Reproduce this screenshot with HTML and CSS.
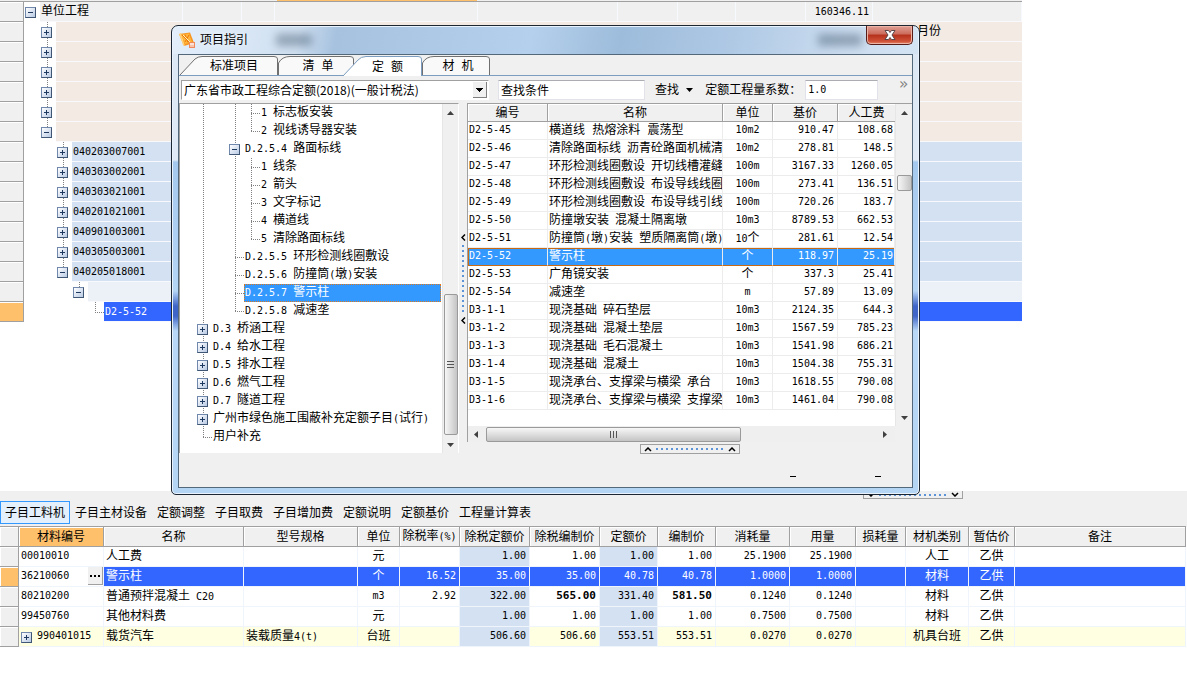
FILE: index.html
```html
<!DOCTYPE html>
<html lang="zh-CN">
<head>
<meta charset="utf-8">
<title>项目指引</title>
<link rel="stylesheet" href="styles.css">
</head>
<body>
<main class="desk">
<section class="sheet" aria-label="单位工程">
  <div class="strip"><span class="strip-hot"></span></div>
  <div class="row total"><span class="gut"></span><span class="tw"><button class="box minus" aria-label="折叠"></button></span><span class="cell c1">单位工程</span><span class="cell c2"></span><span class="cell c3"></span><span class="cell c4"></span><span class="cell c5"></span><span class="cell c6"></span><span class="cell c7"></span><span class="cell c8"></span><span class="cell c9 m">160346.11</span><span class="cell"></span></div>
  <div class="row part"><span class="gut"></span><span class="tw"></span><span class="tw v"><button class="box plus" aria-label="展开"></button></span><span class="cell"></span><span class="cell month">月份</span></div>
  <div class="row part"><span class="gut"></span><span class="tw"></span><span class="tw v"><button class="box plus" aria-label="展开"></button></span><span class="cell"></span></div>
  <div class="row part"><span class="gut"></span><span class="tw"></span><span class="tw v"><button class="box plus" aria-label="展开"></button></span><span class="cell"></span></div>
  <div class="row part"><span class="gut"></span><span class="tw"></span><span class="tw v"><button class="box plus" aria-label="展开"></button></span><span class="cell"></span></div>
  <div class="row part"><span class="gut"></span><span class="tw"></span><span class="tw v"><button class="box plus" aria-label="展开"></button></span><span class="cell"></span></div>
  <div class="row part"><span class="gut"></span><span class="tw"></span><span class="tw half"><button class="box minus" aria-label="折叠"></button></span><span class="cell"></span></div>
  <div class="row item"><span class="gut"></span><span class="tw"></span><span class="tw"></span><span class="tw v"><button class="box plus" aria-label="展开"></button></span><span class="cell m">040203007001</span></div>
  <div class="row item"><span class="gut"></span><span class="tw"></span><span class="tw"></span><span class="tw v"><button class="box plus" aria-label="展开"></button></span><span class="cell m">040303002001</span></div>
  <div class="row item"><span class="gut"></span><span class="tw"></span><span class="tw"></span><span class="tw v"><button class="box plus" aria-label="展开"></button></span><span class="cell m">040303021001</span></div>
  <div class="row item"><span class="gut"></span><span class="tw"></span><span class="tw"></span><span class="tw v"><button class="box plus" aria-label="展开"></button></span><span class="cell m">040201021001</span></div>
  <div class="row item"><span class="gut"></span><span class="tw"></span><span class="tw"></span><span class="tw v"><button class="box plus" aria-label="展开"></button></span><span class="cell m">040901003001</span></div>
  <div class="row item"><span class="gut"></span><span class="tw"></span><span class="tw"></span><span class="tw v"><button class="box plus" aria-label="展开"></button></span><span class="cell m">040305003001</span></div>
  <div class="row item"><span class="gut"></span><span class="tw"></span><span class="tw"></span><span class="tw half"><button class="box minus" aria-label="折叠"></button></span><span class="cell m">040205018001</span></div>
  <div class="row blank"><span class="gut"></span><span class="tw"></span><span class="tw"></span><span class="tw"></span><span class="tw half"><button class="box minus" aria-label="折叠"></button></span><span class="cell"></span></div>
  <div class="row current"><span class="gut"></span><span class="tw"></span><span class="tw"></span><span class="tw"></span><span class="tw"></span><span class="tw end"></span><span class="cell m">D2-5-52</span></div>
</section>

<section class="dialog" role="dialog" aria-labelledby="dlg-title">
  <header class="title">
    <svg class="logo" width="16" height="16" viewBox="0 0 16 16" aria-hidden="true"><path d="M0 2 11 0.500 15 11 5 14Z" fill="#f7941d"/><path d="M0 2 2 1 6 14 4 13Z" fill="#ffd27a"/><path d="M2 2.500 10 1.500 13 10 6 12Z" fill="#ffb43c"/><path d="M3 3l7 7M6 2.500l3 8M10 3 6 10" stroke="#e8780c" stroke-width="1" fill="none"/><path d="M4 3l7 7" stroke="#fff1b8" stroke-width="1" fill="none"/><path d="M10 10h6v6h-6z" fill="#f08a5c"/><path d="M11 12h4M12 11v4M14 11v4" stroke="#fff" stroke-width="1"/></svg>
    <h1 id="dlg-title">项目指引</h1>
    <span class="smudge s1"></span><span class="smudge s2"></span>
    <button class="close" aria-label="关闭"><svg width="14" height="12" viewBox="0 0 14 12"><path d="M2 1.500h3.500L7 3.500l1.500-2H12L9 6l3 4.500H8.500L7 8.500l-1.500 2H2L5 6Z" fill="#fff" stroke="#5a4548" stroke-width="1"/></svg></button>
  </header>
  <div class="client">
    <nav class="tabs">
      <button class="tab t1"><svg viewBox="0 0 98 20" width="98" height="20"><path d="M0 20 15 4Q18 1.500 22 1.500H94Q97.500 1.500 97.500 4V20" /></svg><span>标准项目</span></button>
      <button class="tab t2"><svg viewBox="0 0 76 20" width="76" height="20"><path d="M.5 20V8Q4 1.500 12 1.500H72Q75.500 1.500 75.500 4V20"/></svg><span>清 单</span></button>
      <button class="tab t3" aria-current="true"><svg viewBox="0 0 79 21" width="79" height="21"><path d="M0 21 15 5Q18 1.500 23 1.500H75Q78.500 1.500 78.500 4V21"/></svg><span>定 额</span></button>
      <button class="tab t4"><svg viewBox="0 0 68 20" width="68" height="20"><path d="M.5 20V8Q4 1.500 12 1.500H64Q67.500 1.500 67.500 4V20"/></svg><span>材 机</span></button>
    </nav>
    <div class="tools">
      <select class="library" aria-label="定额库"><option>广东省市政工程综合定额(2018)(一般计税法)</option></select>
      <input class="search" type="text" value="查找条件" aria-label="查找条件">
      <button class="find">查找 <svg width="7" height="4" viewBox="0 0 7 4"><path d="M0 0h7L3.500 4Z"/></svg></button>
      <label for="ratio">定额工程量系数：</label>
      <input id="ratio" class="ratio" type="text" value="1.0">
      <button class="more" aria-label="更多">»</button>
    </div>
    <div class="panes">
      <div class="treepane">
        <div class="tree">
          <div class="node"><span class="tw v"></span><span class="tw"></span><span class="tw v"></span><span class="tw tee"></span><span class="lab"><span class="m">1 </span>标志板安装</span></div>
          <div class="node"><span class="tw v"></span><span class="tw"></span><span class="tw v"></span><span class="tw end"></span><span class="lab"><span class="m">2 </span>视线诱导器安装</span></div>
          <div class="node"><span class="tw v"></span><span class="tw"></span><span class="tw v"><button class="box minus" aria-label="折叠"></button></span><span class="lab"><span class="m">D.2.5.4 </span>路面标线</span></div>
          <div class="node"><span class="tw v"></span><span class="tw"></span><span class="tw v"></span><span class="tw tee"></span><span class="lab"><span class="m">1 </span>线条</span></div>
          <div class="node"><span class="tw v"></span><span class="tw"></span><span class="tw v"></span><span class="tw tee"></span><span class="lab"><span class="m">2 </span>箭头</span></div>
          <div class="node"><span class="tw v"></span><span class="tw"></span><span class="tw v"></span><span class="tw tee"></span><span class="lab"><span class="m">3 </span>文字标记</span></div>
          <div class="node"><span class="tw v"></span><span class="tw"></span><span class="tw v"></span><span class="tw tee"></span><span class="lab"><span class="m">4 </span>横道线</span></div>
          <div class="node"><span class="tw v"></span><span class="tw"></span><span class="tw v"></span><span class="tw end"></span><span class="lab"><span class="m">5 </span>清除路面标线</span></div>
          <div class="node"><span class="tw v"></span><span class="tw"></span><span class="tw tee"></span><span class="lab"><span class="m">D.2.5.5 </span>环形检测线圈敷设</span></div>
          <div class="node"><span class="tw v"></span><span class="tw"></span><span class="tw tee"></span><span class="lab"><span class="m">D.2.5.6 </span>防撞筒<span class="m">(</span>墩<span class="m">)</span>安装</span></div>
          <div class="node sel"><span class="tw v"></span><span class="tw"></span><span class="tw tee"></span><span class="lab"><span class="m">D.2.5.7 </span>警示柱</span></div>
          <div class="node"><span class="tw v"></span><span class="tw"></span><span class="tw end"></span><span class="lab"><span class="m">D.2.5.8 </span>减速垄</span></div>
          <div class="node"><span class="tw v"><button class="box plus" aria-label="展开"></button></span><span class="lab"><span class="m">D.3 </span>桥涵工程</span></div>
          <div class="node"><span class="tw v"><button class="box plus" aria-label="展开"></button></span><span class="lab"><span class="m">D.4 </span>给水工程</span></div>
          <div class="node"><span class="tw v"><button class="box plus" aria-label="展开"></button></span><span class="lab"><span class="m">D.5 </span>排水工程</span></div>
          <div class="node"><span class="tw v"><button class="box plus" aria-label="展开"></button></span><span class="lab"><span class="m">D.6 </span>燃气工程</span></div>
          <div class="node"><span class="tw v"><button class="box plus" aria-label="展开"></button></span><span class="lab"><span class="m">D.7 </span>隧道工程</span></div>
          <div class="node"><span class="tw v"><button class="box plus" aria-label="展开"></button></span><span class="lab">广州市绿色施工围蔽补充定额子目<span class="m">(</span>试行<span class="m">)</span></span></div>
          <div class="node"><span class="tw end"></span><span class="lab">用户补充</span></div>
        </div>
        <div class="vbar"><svg width="7" height="4" viewBox="0 0 7 4"><path d="M0 4h7L3.500 0Z"/></svg><span class="track tall"></span><span class="thumb long"><svg width="7" height="8" viewBox="0 0 7 8"><path d="M0 .5h7M0 3.500h7M0 6.500h7" stroke="#555"/></svg></span><svg width="7" height="4" viewBox="0 0 7 4"><path d="M0 0h7L3.500 4Z"/></svg></div>
      </div>
      <div class="split"><svg width="5" height="7" viewBox="0 0 5 7"><path d="M4 .5 1 3.500l3 3" fill="none" stroke="#000" stroke-width="1.500"/></svg><span class="dots"></span><svg width="5" height="7" viewBox="0 0 5 7"><path d="M4 .5 1 3.500l3 3" fill="none" stroke="#000" stroke-width="1.500"/></svg></div>
      <div class="right">
      <div class="quota">
        <div class="list">
          <table class="qt">
            <colgroup><col class="q1"><col class="q2"><col class="q3"><col class="q4"><col class="q5"></colgroup>
            <thead><tr><th>编号</th><th>名称</th><th>单位</th><th>基价</th><th>人工费</th></tr></thead>
            <tbody>
            <tr><td>D2-5-45</td><td>横道线 热熔涂料 震荡型</td><td>10m2</td><td>910.47</td><td>108.68</td></tr>
            <tr><td>D2-5-46</td><td>清除路面标线<span class="m"> </span>沥青砼路面机械清</td><td>10m2</td><td>278.81</td><td>148.5</td></tr>
            <tr><td>D2-5-47</td><td>环形检测线圈敷设<span class="m"> </span>开切线槽灌缝</td><td>100m</td><td>3167.33</td><td>1260.05</td></tr>
            <tr><td>D2-5-48</td><td>环形检测线圈敷设<span class="m"> </span>布设导线线圈</td><td>100m</td><td>273.41</td><td>136.51</td></tr>
            <tr><td>D2-5-49</td><td>环形检测线圈敷设<span class="m"> </span>布设导线引线</td><td>100m</td><td>720.26</td><td>183.7</td></tr>
            <tr><td>D2-5-50</td><td>防撞墩安装<span class="m"> </span>混凝土隔离墩</td><td>10m3</td><td>8789.53</td><td>662.53</td></tr>
            <tr><td>D2-5-51</td><td>防撞筒<span class="m">(</span>墩<span class="m">)</span>安装<span class="m"> </span>塑质隔离筒<span class="m">(</span>墩<span class="m">)</span></td><td>10<span class="z">个</span></td><td>281.61</td><td>12.54</td></tr>
            <tr class="on"><td>D2-5-52</td><td>警示柱</td><td><span class="z">个</span></td><td>118.97</td><td>25.19</td></tr>
            <tr><td>D2-5-53</td><td>广角镜安装</td><td><span class="z">个</span></td><td>337.3</td><td>25.41</td></tr>
            <tr><td>D2-5-54</td><td>减速垄</td><td>m</td><td>57.89</td><td>13.09</td></tr>
            <tr><td>D3-1-1</td><td>现浇基础<span class="m"> </span>碎石垫层</td><td>10m3</td><td>2124.35</td><td>644.3</td></tr>
            <tr><td>D3-1-2</td><td>现浇基础<span class="m"> </span>混凝土垫层</td><td>10m3</td><td>1567.59</td><td>785.23</td></tr>
            <tr><td>D3-1-3</td><td>现浇基础<span class="m"> </span>毛石混凝土</td><td>10m3</td><td>1541.98</td><td>686.21</td></tr>
            <tr><td>D3-1-4</td><td>现浇基础<span class="m"> </span>混凝土</td><td>10m3</td><td>1504.38</td><td>755.31</td></tr>
            <tr><td>D3-1-5</td><td>现浇承台、支撑梁与横梁<span class="m"> </span>承台</td><td>10m3</td><td>1618.55</td><td>790.08</td></tr>
            <tr><td>D3-1-6</td><td>现浇承台、支撑梁与横梁<span class="m"> </span>支撑梁</td><td>10m3</td><td>1461.04</td><td>790.08</td></tr>
            </tbody>
          </table>
          <div class="hbar"><svg width="4" height="7" viewBox="0 0 4 7"><path d="M4 0v7L0 3.500Z"/></svg><span class="thumb wide"><svg width="8" height="7" viewBox="0 0 8 7"><path d="M.5 0v7M3.500 0v7M6.500 0v7" stroke="#555"/></svg></span><span class="track"></span><svg width="4" height="7" viewBox="0 0 4 7"><path d="M0 0v7l4-3.500Z"/></svg></div>
        </div>
        <div class="side"><div class="vbar qbar"><svg width="7" height="4" viewBox="0 0 7 4"><path d="M0 4h7L3.500 0Z"/></svg><span class="track upper"></span><span class="thumb tiny"></span><span class="track"></span><svg width="7" height="4" viewBox="0 0 7 4"><path d="M0 0h7L3.500 4Z"/></svg></div></div>
      </div>
      <div class="fold up"><svg width="8" height="5" viewBox="0 0 8 5"><path d="m1 4 3-3 3 3" fill="none" stroke="#000" stroke-width="1.500"/></svg><span class="hdots"></span><svg width="8" height="5" viewBox="0 0 8 5"><path d="m1 4 3-3 3 3" fill="none" stroke="#000" stroke-width="1.500"/></svg></div>
      </div>
    </div>
    <footer class="status"><span></span><span></span></footer>
  </div>
</section>
</main>

<section class="lower">
  <div class="foldrow"><div class="fold down"><svg width="8" height="5" viewBox="0 0 8 5"><path d="m1 1 3 3 3-3" fill="none" stroke="#000" stroke-width="1.500"/></svg><span class="hdots"></span><svg width="8" height="5" viewBox="0 0 8 5"><path d="m1 1 3 3 3-3" fill="none" stroke="#000" stroke-width="1.500"/></svg></div></div>
  <nav class="views"><button class="view active">子目工料机</button><button class="view">子目主材设备</button><button class="view">定额调整</button><button class="view">子目取费</button><button class="view">子目增加费</button><button class="view">定额说明</button><button class="view">定额基价</button><button class="view">工程量计算表</button></nav>
  <table class="mt">
    <colgroup><col class="w19"><col class="w85"><col class="w140"><col class="w114"><col class="w42"><col class="w60"><col class="w70"><col class="w70"><col class="w58"><col class="w58"><col class="w74"><col class="w66"><col class="w50"><col class="w63"><col class="w46"><col></colgroup>
    <thead><tr><th></th><th class="hot">材料编号</th><th>名称</th><th>型号规格</th><th>单位</th><th>除税率<span class="m">(%)</span></th><th>除税定额价</th><th>除税编制价</th><th>定额价</th><th>编制价</th><th>消耗量</th><th>用量</th><th>损耗量</th><th>材机类别</th><th>暂估价</th><th>备注</th></tr></thead>
    <tbody>
    <tr><th></th><td class="m">00010010</td><td>人工费</td><td></td><td class="c">元</td><td class="n"></td><td class="n tint">1.00</td><td class="n">1.00</td><td class="n tint">1.00</td><td class="n">1.00</td><td class="n">25.1900</td><td class="n">25.1900</td><td></td><td class="c">人工</td><td class="c">乙供</td><td></td></tr>
    <tr class="cur"><th></th><td class="m code"><div class="edit">36210060<button class="dotbtn" aria-label="选择材料"><i></i><i></i><i></i></button></div></td><td>警示柱</td><td></td><td class="c">个</td><td class="n">16.52</td><td class="n">35.00</td><td class="n">35.00</td><td class="n">40.78</td><td class="n">40.78</td><td class="n">1.0000</td><td class="n">1.0000</td><td></td><td class="c">材料</td><td class="c">乙供</td><td></td></tr>
    <tr><th></th><td class="m">80210200</td><td>普通预拌混凝土<span class="m"> C20</span></td><td></td><td class="c m">m3</td><td class="n">2.92</td><td class="n tint">322.00</td><td class="n strong">565.00</td><td class="n tint">331.40</td><td class="n strong">581.50</td><td class="n">0.1240</td><td class="n">0.1240</td><td></td><td class="c">材料</td><td class="c">乙供</td><td></td></tr>
    <tr><th></th><td class="m">99450760</td><td>其他材料费</td><td></td><td class="c">元</td><td class="n"></td><td class="n tint">1.00</td><td class="n">1.00</td><td class="n tint">1.00</td><td class="n">1.00</td><td class="n">0.7500</td><td class="n">0.7500</td><td></td><td class="c">材料</td><td class="c">乙供</td><td></td></tr>
    <tr class="warm"><th></th><td class="m"><div class="parent"><button class="box plus" aria-label="展开"></button>990401015</div></td><td>载货汽车</td><td>装载质量<span class="m">4(t)</span></td><td class="c">台班</td><td class="n"></td><td class="n tint">506.60</td><td class="n">506.60</td><td class="n tint">553.51</td><td class="n">553.51</td><td class="n">0.0270</td><td class="n">0.0270</td><td></td><td class="c">机具台班</td><td class="c">乙供</td><td></td></tr>
    </tbody>
  </table>
</section>
</body>
</html>
```
FILE: styles.css
```css
* { box-sizing: border-box; }
body {
  margin: 0;
  background: #fff;
  color: #000;
  font-family: "DejaVu Sans Mono", "Noto Sans CJK SC", monospace;
  font-size: 12px;
  line-height: 16px;
}
button, input, select { font: inherit; color: inherit; margin: 0; padding: 0; border: 0; background: none; }
.m { font-size: 10px; }
.desk { position: relative; min-height: 491px; }

/* project sheet */
.sheet { margin-right: 165px; }
.strip { display: flex; height: 2px; background: #f0f0f0; border-bottom: 1px solid #a0a0a0; padding-left: 277px; }
.strip-hot { width: 200px; background: #ffc06c; }
.row { display: flex; height: 20px; }
.gut { width: 24px; background: #f0f0f0; border-right: 1px solid #a0a0a0; border-bottom: 1px solid #a0a0a0; box-shadow: inset 0 1px #fff; }
.cell { flex: 1; padding-left: 1px; line-height: 18px; border-bottom: 1px solid #f8f9fc; white-space: nowrap; }
.total .cell { background: #f0f0f0; border-right: 1px solid #f6f9fd; }
.total .cell:not(:last-child) { flex: none; }
.total .c1 { width: 143px; }
.total .c2 { width: 59px; }
.total .c3 { width: 33px; }
.total .c4 { width: 203px; }
.total .c5 { width: 140px; }
.total .c6 { width: 60px; }
.total .c7 { width: 58px; }
.total .c8 { width: 70px; }
.total .c9 { width: 67px; padding-right: 3px; text-align: right; }
.part .cell { background: #f2eae3; }
.part .month { flex: none; width: 106px; }
.item .cell { background: #d3e1f2; }
.m.cell { line-height: 20px; }
.blank .cell { background: #ebf1f7; }
.current .cell { background: #3366ff; color: #fff; }
.current .gut { background: #ffc06c; }

/* tree connectors */
.tw { flex: none; width: 16px; display: flex; align-items: center; padding-left: 1px; background-repeat: no-repeat; }
.v {
  background-image: repeating-linear-gradient(#808080 0 1px, transparent 1px 2px);
  background-size: 1px 100%;
  background-position: 7px 0;
  background-repeat: no-repeat;
}
.half {
  background-image: repeating-linear-gradient(#808080 0 1px, transparent 1px 2px);
  background-size: 1px 50%;
  background-position: 7px 0;
}
.tee, .end {
  background-image: repeating-linear-gradient(#808080 0 1px, transparent 1px 2px), repeating-linear-gradient(90deg, #808080 0 1px, transparent 1px 2px);
  background-size: 1px 100%, 9px 1px;
  background-position: 7px 0, 7px 50%;
}
.end { background-size: 1px 50%, 9px 1px; }
.box {
  width: 11px;
  height: 11px;
  flex: none;
  border: 1px solid #7088ac;
  border-right-color: #3f5675;
  border-bottom-color: #3f5675;
  background-color: #dfe8f4;
  background-repeat: no-repeat;
  background-position: center;
}
.minus { background-image: linear-gradient(#1f3a60, #1f3a60), linear-gradient(135deg, #fff, #b9cae4); background-size: 5px 1px, 9px 9px; }
.plus { background-image: linear-gradient(#1f3a60, #1f3a60), linear-gradient(#1f3a60, #1f3a60), linear-gradient(135deg, #fff, #b9cae4); background-size: 5px 1px, 1px 5px, 9px 9px; }

/* dialog */
.dialog {
  position: absolute;
  left: 171px;
  top: 25px;
  width: 749px;
  padding: 0 6px 6px;
  border: 1px solid #1c2733;
  border-radius: 7px 7px 5px 5px;
  box-shadow: inset 0 0 0 1px #e8f3fd;
  background:
    linear-gradient(100deg, #e3eefa 0, #d0e0f1 17%, #a7c2df 22%, #b5d0ec 48%, #9dbcdb 60%, #afc9e5 75%, #cbdcef 90%, #d5e4f3) 0 0 / 100% 28px no-repeat,
    linear-gradient(#dbe7f4 0, #dfeaf6 134px, #a5c9ee 136px, #b5d5f5 265px, #3f65c8 280px, #3f65c8 290px, #b9d8f7 305px, #b5d5f5);
}
.title { display: flex; height: 28px; align-items: center; padding-left: 1px; }
.title h1 { margin: 0 0 0 5px; font-size: 12px; font-weight: 400; text-shadow: 0 0 6px #fff; }
.smudge { height: 12px; background: #31485e; filter: blur(4px); opacity: .4; }
.s1 { width: 36px; margin-left: 28px; }
.s2 { width: 44px; margin-left: auto; }
.close {
  width: 47px;
  height: 19px;
  margin-left: 4px;
  align-self: flex-start;
  display: grid;
  place-items: center;
  border: 1px solid #571c18;
  border-top: 0;
  border-radius: 0 0 5px 5px;
  box-shadow: inset 0 0 0 1px #eeb5a6;
  background: linear-gradient(#dfa196 0, #cc6b5b 45%, #b5301b 50%, #cf5238 85%, #e88a6c);
}
.client { border: 1px solid #53687b; background: #f0f0f0; }
.tabs { display: flex; height: 21px; align-items: flex-end; padding-left: 1px; border-bottom: 1px solid #7c9dbf; }
.tab { display: grid; place-items: center; height: 20px; line-height: 16px; }
.tab svg, .tab span { grid-area: 1 / 1; }
.tab svg { fill: #f9f9f9; stroke: #707070; align-self: start; }
.tab span { padding: 2px 0 0 10px; }
.t2 span, .t4 span { padding-left: 4px; }
.t3 { margin-left: -11px; z-index: 1; height: 21px; margin-bottom: -1px; }
.t3 svg { fill: #fff; stroke: #7c9dbf; }
.tools { display: flex; align-items: center; height: 27px; padding: 0 4px 0 2px; }
.library {
  width: 308px;
  height: 20px;
  padding-left: 2px;
  border: 1px solid #a0a0a0;
  border-right-color: #fff;
  border-bottom-color: #fff;
  appearance: none;
  font-family: "Noto Sans CJK SC", sans-serif;
  background:
    linear-gradient(45deg, transparent 50%, #000 50%) 293px 8px / 4px 4px no-repeat,
    linear-gradient(-45deg, transparent 50%, #000 50%) 297px 8px / 4px 4px no-repeat,
    linear-gradient(#f0f0f0, #f0f0f0) 291px 1px / 13px 15px no-repeat,
    linear-gradient(#808080, #808080) 291px 1px / 14px 16px no-repeat,
    #fff;
  background:
    conic-gradient(from -45deg at 50% 100%, #000 90deg, transparent 0) 294px 7px / 7px 4px no-repeat,
    linear-gradient(#f0f0f0, #f0f0f0) 291px 1px / 13px 15px no-repeat,
    linear-gradient(#808080, #808080) 291px 1px / 14px 16px no-repeat,
    #fff;
}
.search, .ratio { height: 20px; padding: 0 2px; border: 1px solid #e2e3ea; border-top-color: #abadb3; background: #fff; }
.search { width: 147px; margin-left: 9px; }
.find { margin: 0 12px 0 10px; white-space: nowrap; }
.find svg { vertical-align: 2px; }
.ratio { width: 73px; margin-left: 4px; font-size: 10px; }
.more { margin-left: auto; align-self: flex-start; color: #808080; font-size: 15px; line-height: 16px; }
.panes { display: flex; align-items: flex-start; }
.treepane { display: flex; width: 280px; min-height: 350px; border-top: 1px solid #a0a0a0; border-left: 1px solid #a0a0a0; background: #fff; border-right: 1px solid #fff; }
.tree { flex: 1; min-width: 0; padding-left: 16px; }
.node { display: flex; height: 18px; }
.lab { flex: 1; padding-left: 1px; margin-right: 1px; line-height: 16px; white-space: nowrap; }
.sel .lab { background: #3399ff; color: #fff; outline: 1px dotted #e07818; outline-offset: -1px; }
.vbar { width: 16px; display: flex; flex-direction: column; align-items: center; padding: 7px 0 6px; background: #f0f0f0; border-left: 1px solid #e6e6e6; }
.vbar svg, .hbar svg { fill: #404040; }
.track { flex: 1; }
.thumb { display: grid; place-items: center; border: 1px solid #9a9a9a; border-radius: 2px; background: linear-gradient(90deg, #f7f7f7, #dedede 50%, #c4c4c6); }
.tall { flex: none; height: 179px; }
.long { width: 14px; height: 141px; margin-bottom: 8px; }
.split { width: 8px; align-self: stretch; display: flex; flex-direction: column; align-items: center; padding-top: 131px; gap: 4px; }
.dots { width: 2px; height: 68px; background: repeating-linear-gradient(#5b93d6 0 2px, transparent 2px 5px); }
.right { flex: 1; min-width: 0; display: flex; flex-direction: column; align-items: center; }
.quota { display: flex; width: 100%; border-top: 1px solid #a0a0a0; border-left: 1px solid #a0a0a0; background: #fff; }
.list { flex: 1; min-width: 0; }
table { border-spacing: 0; table-layout: fixed; }
th { font-weight: 400; padding: 0; }
td { padding: 0; }
.qt { width: 100%; }
.q1 { width: 80px; }
.q2 { width: 175px; }
.q3 { width: 50px; }
.q4 { width: 65px; }
.qt th { height: 18px; line-height: 16px; background: #f0f0f0; border-bottom: 1px solid #a0a0a0; border-right: 1px solid #a0a0a0; box-shadow: inset 1px 1px #fff; }
.qt td { height: 18px; line-height: 16px; font-size: 10px; padding: 0 1px; border-right: 1px solid #ececec; border-bottom: 1px solid #ececec; white-space: nowrap; overflow: hidden; vertical-align: top; }
.qt td:nth-child(2) { font-size: 12px; }
.qt td:nth-child(3) { text-align: center; }
.qt td:nth-child(4) { text-align: right; padding-right: 3px; }
.qt td:nth-child(5) { text-align: right; }
.qt th:last-child { border-right: 0; }
.z { font-size: 12px; }
.on td { background: #3399ff; color: #fff; border-bottom-color: #c96a12; box-shadow: inset 0 1px #c96a12; }
.on td:first-child { box-shadow: inset 1px 1px #c96a12; }
.hbar { display: flex; align-items: center; height: 16px; margin-top: 16px; padding: 0 8px 0 6px; background: #efefef; }
.wide { width: 255px; height: 15px; margin-left: 8px; background: linear-gradient(#f7f7f7, #dedede 50%, #c4c4c6); }
.side { display: flex; padding-bottom: 16px; background: #f0f0f0; }
.qbar { width: 17px; }
.upper { flex: none; height: 60px; }
.tiny { width: 15px; height: 16px; }
.fold { display: flex; align-items: center; justify-content: space-between; width: 100px; height: 10px; padding: 0 3px; border: 1px solid #a0a0a0; background: #f0f0f0; }
.up { margin-top: 2px; }
.hdots { width: 68px; height: 2px; background: repeating-linear-gradient(90deg, #5b93d6 0 2px, transparent 2px 5px); }
.status { display: flex; justify-content: flex-end; gap: 79px; height: 33px; padding: 22px 31px 0 0; }
.status span { width: 6px; height: 1px; background: #000; }

/* lower panel */
.lower { background: linear-gradient(#f0f0f0, #f0f0f0) 0 0 / 100% 36px no-repeat; }
.foldrow { height: 10px; padding-left: 863px; }
.down { height: 8px; border-top: 0; }
.views { display: flex; height: 25px; align-items: flex-start; }
.view { height: 23px; padding: 0 5px; white-space: nowrap; }
.active { border: 1px solid #3399ff; padding: 0 4px; background: #e4f0fb; }
.mt { width: calc(100% - 1px); border-top: 1px solid #a0a0a0; }
.w19 { width: 19px; }
.w85 { width: 85px; }
.w140 { width: 140px; }
.w114 { width: 114px; }
.w42 { width: 42px; }
.w60 { width: 60px; }
.w70 { width: 70px; }
.w58 { width: 58px; }
.w74 { width: 74px; }
.w66 { width: 66px; }
.w50 { width: 50px; }
.w63 { width: 63px; }
.w46 { width: 46px; }
.mt th { height: 20px; line-height: 18px; background: #f0f0f0; border-right: 1px solid #a0a0a0; border-bottom: 1px solid #a0a0a0; box-shadow: inset 1px 1px #fff; white-space: nowrap; }
.mt .hot { background: #ffc06c; }
.mt td { height: 20px; line-height: 18px; padding: 0 2px; border-right: 1px solid #f0f4fb; border-bottom: 1px solid #f0f4fb; white-space: nowrap; vertical-align: top; }
.mt .c { text-align: center; }
.mt .n { text-align: right; font-size: 10px; padding-right: 3px; }
.mt .tint { background: #d3e1f2; }
.mt .strong { font-size: 11px; font-weight: 700; }
.cur td { background: #3366ff; color: #fff; }
.cur .code { background: #fff; color: #000; padding-right: 0; }
.cur th { background: #ffc06c; }
.warm td { background: #ffffe1; }
.edit, .parent { display: flex; justify-content: space-between; }
.parent { justify-content: flex-start; gap: 5px; }
.parent .box { margin-top: 5px; }
.dotbtn { display: flex; align-items: center; justify-content: center; gap: 2px; width: 15px; height: 18px; background: #f0f0f0; border-right: 1px solid #a0a0a0; border-bottom: 1px solid #a0a0a0; }
.dotbtn i { width: 2px; height: 2px; background: #000; }
```
